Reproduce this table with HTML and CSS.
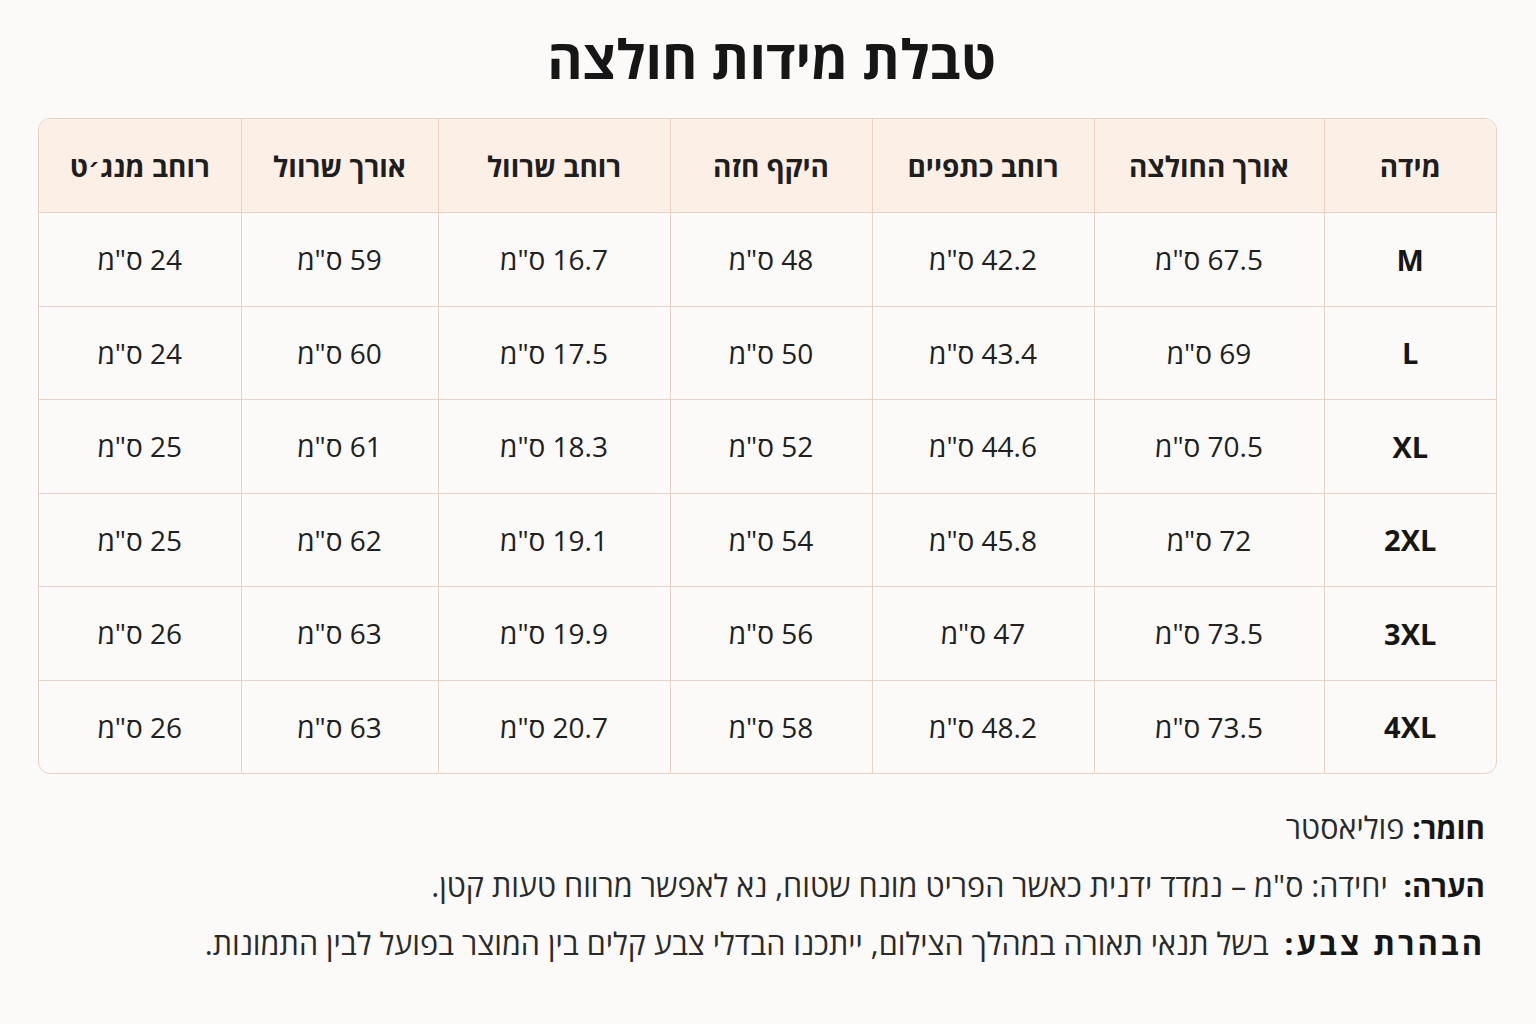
FILE: index.html
```html
<!DOCTYPE html>
<html lang="he" dir="rtl">
<head>
<meta charset="utf-8">
<title>טבלת מידות חולצה</title>
<link rel="stylesheet" href="styles.css">
</head>
<body>
<div class="page">
  <h1 class="title">טבלת מידות חולצה</h1>
  <div class="table-wrap">
    <table class="sizes">
      <colgroup>
        <col class="c1"><col class="c2"><col class="c3"><col class="c4"><col class="c5"><col class="c6"><col class="c7">
      </colgroup>
      <thead>
        <tr><th>מידה</th><th>אורך החולצה</th><th>רוחב כתפיים</th><th>היקף חזה</th><th>רוחב שרוול</th><th>אורך שרוול</th><th>רוחב מנג׳ט</th></tr>
      </thead>
      <tbody>
        <tr><td class="size">M</td><td>67.5 ס"מ</td><td>42.2 ס"מ</td><td>48 ס"מ</td><td>16.7 ס"מ</td><td>59 ס"מ</td><td>24 ס"מ</td></tr>
        <tr><td class="size">L</td><td>69 ס"מ</td><td>43.4 ס"מ</td><td>50 ס"מ</td><td>17.5 ס"מ</td><td>60 ס"מ</td><td>24 ס"מ</td></tr>
        <tr><td class="size">XL</td><td>70.5 ס"מ</td><td>44.6 ס"מ</td><td>52 ס"מ</td><td>18.3 ס"מ</td><td>61 ס"מ</td><td>25 ס"מ</td></tr>
        <tr><td class="size">2XL</td><td>72 ס"מ</td><td>45.8 ס"מ</td><td>54 ס"מ</td><td>19.1 ס"מ</td><td>62 ס"מ</td><td>25 ס"מ</td></tr>
        <tr><td class="size">3XL</td><td>73.5 ס"מ</td><td>47 ס"מ</td><td>56 ס"מ</td><td>19.9 ס"מ</td><td>63 ס"מ</td><td>26 ס"מ</td></tr>
        <tr><td class="size">4XL</td><td>73.5 ס"מ</td><td>48.2 ס"מ</td><td>58 ס"מ</td><td>20.7 ס"מ</td><td>63 ס"מ</td><td>26 ס"מ</td></tr>
      </tbody>
    </table>
  </div>
  <div class="notes">
    <p class="note"><span class="label">חומר:</span> פוליאסטר</p>
    <p class="note"><span class="label">הערה:</span>&nbsp; יחידה: ס"מ – נמדד ידנית כאשר הפריט מונח שטוח, נא לאפשר מרווח טעות קטן.</p>
    <p class="note"><span class="label wide">הבהרת צבע:</span>&nbsp; בשל תנאי תאורה במהלך הצילום, ייתכנו הבדלי צבע קלים בין המוצר בפועל לבין התמונות.</p>
  </div>
</div>
</body>
</html>
```

FILE: styles.css
```css
html, body {
  margin: 0;
  padding: 0;
  background: #fbfaf8;
}
body {
  font-family: "Open Sans", "DejaVu Sans", sans-serif;
  color: #1c1c1c;
}
.page {
  padding: 25px 39px 0 38px;
}
.title {
  margin: 0 0 27px;
  padding-left: 8px;
  text-align: center;
  font-size: 54px;
  font-weight: 700;
  line-height: 66px;
  color: #161616;
}
.table-wrap {
  border: 1px solid #e7d2c5;
  border-radius: 12px;
  overflow: hidden;
  background: #fbfaf8;
}
.sizes {
  width: 100%;
  border-collapse: collapse;
  table-layout: fixed;
}
.c1 { width: 172px; }
.c2 { width: 230px; }
.c3 { width: 222px; }
.c4 { width: 202px; }
.c5 { width: 232px; }
.c6 { width: 197px; }
.c7 { width: auto; }
.sizes th, .sizes td {
  border-left: 1px solid #e7d2c5;
  border-bottom: 1px solid #e7d2c5;
  text-align: center;
  padding: 0;
}
.sizes th:last-child, .sizes td:last-child { border-left: none; }
.sizes tbody tr:last-child td { border-bottom: none; }
.sizes th {
  height: 93px;
  background: #fcefe6;
  font-size: 28px;
  font-weight: 700;
  color: #1e1e1e;
}
.sizes td {
  height: 92.5px;
  font-size: 28px;
  font-weight: 400;
  color: #202020;
}
.sizes td.size {
  font-weight: 700;
  font-size: 29px;
  color: #161616;
}
.notes {
  padding: 35px 12px 0 0;
}
.note {
  margin: 0 0 21px;
  font-size: 30.5px;
  line-height: 37px;
  color: #2a2a2a;
}
.label {
  font-weight: 700;
  font-size: 29.5px;
  color: #161616;
}
.label.wide {
  font-size: 31px;
  letter-spacing: 3px;
}
```
